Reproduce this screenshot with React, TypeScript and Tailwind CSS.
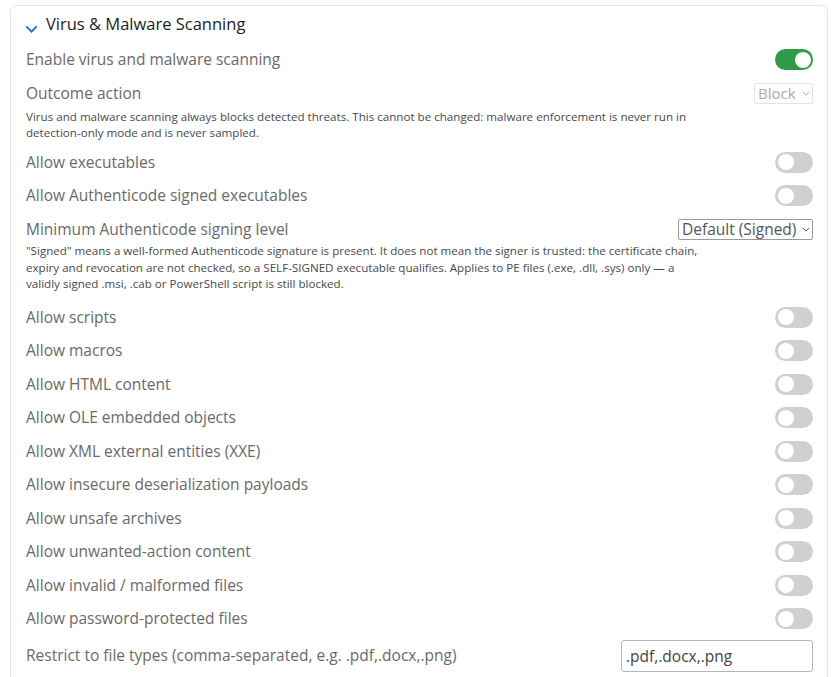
import { useState } from "react"

const toggles = [
  "Allow scripts",
  "Allow macros",
  "Allow HTML content",
  "Allow OLE embedded objects",
  "Allow XML external entities (XXE)",
  "Allow insecure deserialization payloads",
  "Allow unsafe archives",
  "Allow unwanted-action content",
  "Allow invalid / malformed files",
  "Allow password-protected files",
]

function Toggle({ on, onClick }: { on: boolean; onClick: () => void }) {
  return (
    <button
      onClick={onClick}
      className={`relative h-[21px] w-[38px] shrink-0 rounded-full ${on ? "bg-[#2f9b46]" : "bg-[#d0d0d0]"}`}
    >
      <span
        className={`absolute top-[2.5px] h-4 w-4 rounded-full bg-white ${on ? "left-[19.5px]" : "left-[2.5px]"}`}
      />
    </button>
  )
}

function Chevron({ className, width = 1.2 }: { className: string; width?: number }) {
  return (
    <svg viewBox="0 0 10 6" className={className} fill="none" stroke="currentColor" strokeWidth={width}>
      <path d="M1 1l4 4 4-4" />
    </svg>
  )
}

function Row({ label, children }: { label: string; children?: React.ReactNode }) {
  return (
    <div className="flex h-[33.5px] items-center justify-between">
      <span className="text-[15.5px] text-[#6a6a6a]">{label}</span>
      {children}
    </div>
  )
}

export default function App() {
  const [enabled, setEnabled] = useState(true)
  const [flags, setFlags] = useState<Record<string, boolean>>({})
  const [types, setTypes] = useState(".pdf,.docx,.png")

  function flip(key: string) {
    setFlags((current) => ({ ...current, [key]: !current[key] }))
  }

  return (
    <div className="h-[677px] overflow-hidden bg-white pl-[10px] pr-2 pt-[5px] font-['Open_Sans',sans-serif]">
      <div className="h-[700px] rounded-md border border-[#e6e6e6] pl-[15px] pr-[14px]">
        <div className="flex h-[37px] items-center">
          <Chevron className="-ml-[1px] mt-[9px] h-[8px] w-[13px] text-[#1a6fd8]" width={1.4} />
          <h2 className="ml-[8px] text-[16.5px] text-[#1e1e1e]">Virus &amp; Malware Scanning</h2>
        </div>

        <Row label="Enable virus and malware scanning">
          <Toggle on={enabled} onClick={() => setEnabled(!enabled)} />
        </Row>

        <Row label="Outcome action">
          <div className="flex h-[21px] w-[59px] items-center justify-between rounded-[2px] border border-[#e3e3e3] pl-[3px] pr-[2px] text-[15px] text-[#ababab]">
            Block
            <Chevron className="h-[5px] w-[8px]" />
          </div>
        </Row>
        <p className="-mt-[1.5px] pb-[4px] text-[11.6px] leading-[16.5px] text-[#4a4a4a]">
          Virus and malware scanning always blocks detected threats. This cannot be changed: malware enforcement is never run in
          <br />
          detection-only mode and is never sampled.
        </p>

        <Row label="Allow executables">
          <Toggle on={!!flags.exe} onClick={() => flip("exe")} />
        </Row>
        <Row label="Allow Authenticode signed executables">
          <Toggle on={!!flags.auth} onClick={() => flip("auth")} />
        </Row>
        <Row label="Minimum Authenticode signing level">
          <div className="flex h-[21px] w-[135px] items-center justify-between rounded-[2px] border border-[#9a9a9a] pl-[3px] pr-[2px] text-[15.5px] text-[#555]">
            Default (Signed)
            <Chevron className="h-[5px] w-[8px]" />
          </div>
        </Row>
        <p className="-mt-[3px] pb-[8px] text-[11.6px] leading-[16.5px] text-[#4a4a4a]">
          "Signed" means a well-formed Authenticode signature is present. It does not mean the signer is trusted: the certificate chain,
          <br />
          expiry and revocation are not checked, so a SELF-SIGNED executable qualifies. Applies to PE files (.exe, .dll, .sys) only — a
          <br />
          validly signed .msi, .cab or PowerShell script is still blocked.
        </p>

        {toggles.map((label) => (
          <Row key={label} label={label}>
            <Toggle on={!!flags[label]} onClick={() => flip(label)} />
          </Row>
        ))}

        <div className="flex h-[40px] items-center justify-between">
          <span className="text-[15.5px] text-[#6a6a6a]">
            Restrict to file types (comma-separated, e.g. .pdf,.docx,.png)
          </span>
          <input
            value={types}
            onChange={(event) => setTypes(event.target.value)}
            className="h-[32px] w-[192px] rounded-[3px] border border-[#b5b5b5] px-[4px] text-[15.5px] text-[#444] outline-none"
          />
        </div>
      </div>
    </div>
  )
}
